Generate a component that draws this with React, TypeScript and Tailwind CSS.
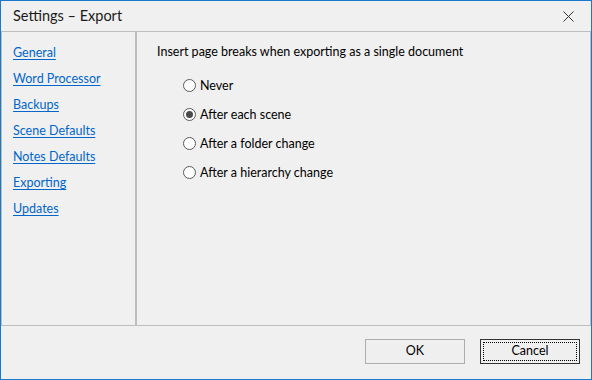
import React from "react";

const links = ["General", "Word Processor", "Backups", "Scene Defaults", "Notes Defaults", "Exporting", "Updates"];
const options = ["Never", "After each scene", "After a folder change", "After a hierarchy change"];

function Radio({ checked }: { checked: boolean }) {
  return (
    <span className="flex h-[13px] w-[13px] items-center justify-center rounded-full border border-[#5a5a5a] bg-white">
      {checked && <span className="h-[7px] w-[7px] rounded-full bg-[#4a4a4a]" />}
    </span>
  );
}

export default function App() {
  return (
    <div
      className="flex h-[380px] w-[592px] flex-col border border-[#1979ca] bg-[#f0f0f0] text-[12.5px] text-black"
      style={{ fontFamily: 'Lato, "Noto Sans", sans-serif' }}
    >
      <div className="flex h-[30px] shrink-0 items-center justify-between pl-[12px] pr-[17px]">
        <span className="text-[14.5px] text-[#1a1a1a]">Settings – Export</span>
        <svg width="11" height="11" viewBox="0 0 11 11" className="text-[#333]">
          <path d="M0.5 0.5 L10.5 10.5 M10.5 0.5 L0.5 10.5" stroke="currentColor" strokeWidth="1" />
        </svg>
      </div>
      <div className="flex h-[295px] shrink-0 border-t border-b border-[#bdbdbd]">
        <div className="flex w-[135px] shrink-0 flex-col gap-[9px] border-l border-r border-[#bdbdbd] pl-[11px] pt-[12px]">
          {links.map((l) => (
            <a key={l} className="h-[17px] leading-[17px] text-[#0066cc] underline underline-offset-2">
              {l}
            </a>
          ))}
        </div>
        <div className="flex flex-1 flex-col border-l border-r border-[#bdbdbd] pl-[20px] pt-[11px]">
          <div className="h-[17px] leading-[17px]">Insert page breaks when exporting as a single document</div>
          <div className="mt-[17px] flex flex-col gap-[12px] pl-[26px]">
            {options.map((o, i) => (
              <label key={o} className="flex h-[17px] items-center gap-[4px] leading-[17px]">
                <Radio checked={i === 1} />
                <span>{o}</span>
              </label>
            ))}
          </div>
        </div>
      </div>
      <div className="flex flex-1 items-start justify-end gap-[15px] pr-[11px] pt-[13px]">
        <button className="h-[25px] w-[100px] border border-[#adadad] bg-[#efefef]">OK</button>
        <button className="flex h-[25px] w-[100px] items-center justify-center border border-[#333333] bg-[#efefef] p-[2px]">
          <span className="flex h-full w-full items-center justify-center border border-dotted border-black">Cancel</span>
        </button>
      </div>
    </div>
  );
}
